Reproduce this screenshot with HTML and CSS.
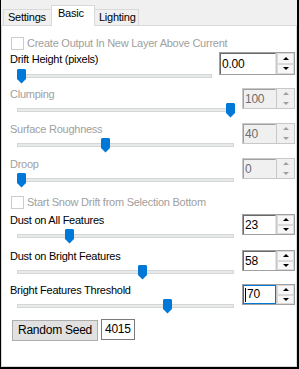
FILE: index.html
```
<html>
	<head>
		<meta charset="utf-8"/>
		<title>Snow Drift</title>
		<link rel="stylesheet" href="styles.css">
	</head>
	<body>
		<div class="window">
			<div class="tabs">
				<div class="tab tab_settings">Settings</div>
				<div class="tab tab_basic selected">Basic</div>
				<div class="tab tab_lighting">Lighting</div>
			</div>
			<div class="panel">
				<div class="check disabled row_output">
					<span class="box"></span>Create Output In New Layer Above Current
				</div>

				<div class="group group_drift">
					<div class="label">Drift Height (pixels)</div>
					<div class="slider slider_drift">
						<div class="track"></div>
						<svg class="thumb" style="left: 7px" width="9" height="15" viewBox="0 0 9 15"><polygon points="0,1 1,0 8,0 9,1 9,10 4.5,14.5 0,10" fill="#0078d7"/></svg>
					</div>
					<div class="spin spin_big">
						<div class="spin_text">0.00</div>
						<div class="spin_btns"><span class="btn_up"></span><span class="btn_down"></span></div>
					</div>
				</div>

				<div class="group group_clump disabled">
					<div class="label">Clumping</div>
					<div class="slider">
						<div class="track"></div>
						<svg class="thumb" style="left: 216px" width="9" height="15" viewBox="0 0 9 15"><polygon points="0,1 1,0 8,0 9,1 9,10 4.5,14.5 0,10" fill="#0078d7"/></svg>
					</div>
					<div class="spin">
						<div class="spin_text">100</div>
						<div class="spin_btns"><span class="btn_up"></span><span class="btn_down"></span></div>
					</div>
				</div>

				<div class="group group_rough disabled">
					<div class="label">Surface Roughness</div>
					<div class="slider">
						<div class="track"></div>
						<svg class="thumb" style="left: 91px" width="9" height="15" viewBox="0 0 9 15"><polygon points="0,1 1,0 8,0 9,1 9,10 4.5,14.5 0,10" fill="#0078d7"/></svg>
					</div>
					<div class="spin">
						<div class="spin_text">40</div>
						<div class="spin_btns"><span class="btn_up"></span><span class="btn_down"></span></div>
					</div>
				</div>

				<div class="group group_droop disabled">
					<div class="label">Droop</div>
					<div class="slider">
						<div class="track"></div>
						<svg class="thumb" style="left: 7px" width="9" height="15" viewBox="0 0 9 15"><polygon points="0,1 1,0 8,0 9,1 9,10 4.5,14.5 0,10" fill="#0078d7"/></svg>
					</div>
					<div class="spin">
						<div class="spin_text">0</div>
						<div class="spin_btns"><span class="btn_up"></span><span class="btn_down"></span></div>
					</div>
				</div>

				<div class="check disabled row_bottom">
					<span class="box"></span>Start Snow Drift from Selection Bottom
				</div>

				<div class="group group_dust_all">
					<div class="label">Dust on All Features</div>
					<div class="slider">
						<div class="track"></div>
						<svg class="thumb" style="left: 55px" width="9" height="15" viewBox="0 0 9 15"><polygon points="0,1 1,0 8,0 9,1 9,10 4.5,14.5 0,10" fill="#0078d7"/></svg>
					</div>
					<div class="spin">
						<div class="spin_text">23</div>
						<div class="spin_btns"><span class="btn_up"></span><span class="btn_down"></span></div>
					</div>
				</div>

				<div class="group group_dust_bright">
					<div class="label">Dust on Bright Features</div>
					<div class="slider">
						<div class="track"></div>
						<svg class="thumb" style="left: 128px" width="9" height="15" viewBox="0 0 9 15"><polygon points="0,1 1,0 8,0 9,1 9,10 4.5,14.5 0,10" fill="#0078d7"/></svg>
					</div>
					<div class="spin">
						<div class="spin_text">58</div>
						<div class="spin_btns"><span class="btn_up"></span><span class="btn_down"></span></div>
					</div>
				</div>

				<div class="group group_threshold">
					<div class="label">Bright Features Threshold</div>
					<div class="slider">
						<div class="track"></div>
						<svg class="thumb" style="left: 153px" width="9" height="15" viewBox="0 0 9 15"><polygon points="0,1 1,0 8,0 9,1 9,10 4.5,14.5 0,10" fill="#0078d7"/></svg>
					</div>
					<div class="spin focused">
						<div class="spin_text"><span class="caret"></span>70</div>
						<div class="spin_btns"><span class="btn_up"></span><span class="btn_down"></span></div>
					</div>
				</div>

				<div class="seed_row">
					<div class="button">Random Seed</div>
					<div class="textbox">4015</div>
				</div>
			</div>
		</div>
	</body>
</html>
```

FILE: styles.css
```
body {
	margin: 0;
	font-family: "Liberation Sans", Arial, sans-serif;
	font-size: 11px;
	letter-spacing: -0.25px;
	color: #000;
}
.window {
	width: 299px;
	height: 369px;
	box-sizing: border-box;
	border-left: 1px solid #000;
	border-right: 2px solid #000;
	border-bottom: 2px solid #000;
	background: #f0f0f0;
	display: flex;
	flex-direction: column;
}
.tabs {
	display: flex;
	align-items: flex-end;
	height: 25px;
	padding-left: 2px;
	flex-shrink: 0;
}
.tab {
	box-sizing: border-box;
	height: 16px;
	border: 1px solid #d9d9d9;
	border-bottom: none;
	background: #f0f0f0;
	padding-left: 4px;
	line-height: 14px;
}
.tab_settings {
	width: 48px;
	border-right: none;
}
.tab_basic {
	width: 44px;
}
.tab_lighting {
	width: 44px;
	border-left: none;
	padding-left: 4px;
}
.tab.selected {
	height: 21px;
	margin-bottom: -1px;
	background: #fff;
	position: relative;
	z-index: 1;
	padding-left: 6px;
	line-height: 14px;
}
.panel {
	flex-grow: 1;
	background: #fff;
	border: 1px solid #d9d9d9;
	padding: 0 1px 0 8px;
	display: flex;
	flex-direction: column;
}
.disabled {
	color: #a0a0a0;
}
.check {
	display: flex;
	align-items: center;
	height: 13px;
	line-height: 13px;
}
.check .box {
	box-sizing: border-box;
	width: 13px;
	height: 13px;
	border: 1px solid #cccccc;
	background: #fff;
	margin-left: 1px;
	margin-right: 3px;
}
.row_output {
	margin-top: 11px;
}
.row_bottom {
	margin-top: 8px;
}
.group {
	display: grid;
	grid-template-columns: 1fr auto;
	grid-template-rows: 13px 15px;
	row-gap: 2px;
	margin-top: 5px;
}
.group_drift {
	margin-top: 2px;
	row-gap: 4px;
}
.group_drift .label {
	margin-top: 1px;
}
.group_clump {
	margin-top: 4px;
}
.group_dust_all {
	margin-top: 5px;
}
.group_dust_bright {
	margin-top: 6px;
}
.group_threshold {
	margin-top: 4px;
}
.label {
	grid-column: 1;
	grid-row: 1;
	line-height: 13px;
}
.slider {
	grid-column: 1;
	grid-row: 2;
	position: relative;
	padding: 0 8px 0 7px;
}
.slider_drift {
	padding-right: 7px;
}
.track {
	box-sizing: border-box;
	height: 4px;
	margin-top: 5px;
	background: #e7eaea;
	border: 1px solid #d6d6d6;
}
.thumb {
	position: absolute;
	top: 0;
}
.spin {
	grid-column: 2;
	grid-row: 1 / span 2;
	align-self: start;
	display: flex;
	box-sizing: border-box;
	width: 53px;
	height: 21px;
	border: 1px solid #a0a0a0;
	background: #fff;
}
.spin_text {
	flex-grow: 1;
	box-sizing: border-box;
	border-top: 1px solid #696969;
	border-left: 1px solid #696969;
	border-right: 1px solid #e3e3e3;
	padding-left: 1px;
	line-height: 17px;
	font-size: 12px;
	display: flex;
	align-items: center;
}
.disabled .spin {
	border-color: #c8c8c8;
	background: #f0f0f0;
}
.disabled .spin_text {
	border-color: #a0a0a0;
	border-right-color: #f0f0f0;
	color: #6d6d6d;
}
.spin_btns {
	width: 17px;
	display: flex;
	flex-direction: column;
	border-left: 1px solid #c8c8c8;
}
.spin_btns span {
	flex-grow: 1;
	display: flex;
	align-items: center;
	justify-content: center;
	background: #f7f7f7;
	border: 1px solid #dadada;
}
.btn_up::after {
	content: "";
	border-left: 3px solid transparent;
	border-right: 3px solid transparent;
	border-bottom: 3px solid #000;
}
.btn_down::after {
	content: "";
	border-left: 3px solid transparent;
	border-right: 3px solid transparent;
	border-top: 3px solid #000;
}
.disabled .btn_up::after {
	border-bottom-color: #a0a0a0;
}
.disabled .btn_down::after {
	border-top-color: #a0a0a0;
}
.disabled .spin_btns span {
	background: #f0f0f0;
	border-color: #f0f0f0;
}
.spin_big {
	width: 76px;
	height: 23px;
	margin-top: 0;
}
.spin.focused .spin_text {
	border: 1px solid #0078d7;
}
.caret {
	display: inline-block;
	width: 1px;
	height: 14px;
	background: #000;
	margin-right: 1px;
}
.seed_row {
	display: flex;
	align-items: flex-start;
	margin-top: 5px;
	padding-left: 2px;
}
.button {
	box-sizing: border-box;
	width: 86px;
	height: 21px;
	margin-top: 1px;
	background: #e1e1e1;
	border: 1px solid #adadad;
	text-align: center;
	line-height: 19px;
	font-size: 12px;
}
.textbox {
	box-sizing: border-box;
	width: 34px;
	height: 21px;
	margin-left: 3px;
	border: 1px solid #7a7a7a;
	box-shadow: inset 1px 1px 0 #fff, inset -1px -1px 0 #fff;
	outline: 1px solid transparent;
	padding-left: 3px;
	line-height: 19px;
	font-size: 12px;
}
```
